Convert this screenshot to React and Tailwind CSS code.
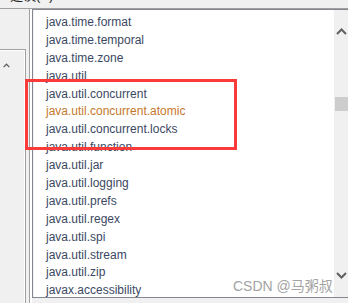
const packages = [
  "java.time.format",
  "java.time.temporal",
  "java.time.zone",
  "java.util",
  "java.util.concurrent",
  "java.util.concurrent.atomic",
  "java.util.concurrent.locks",
  "java.util.function",
  "java.util.jar",
  "java.util.logging",
  "java.util.prefs",
  "java.util.regex",
  "java.util.spi",
  "java.util.stream",
  "java.util.zip",
  "javax.accessibility",
];

const Chevron = ({ down = false, className = "" }) => (
  <svg width="11" height="7" viewBox="0 0 11 7" className={className}>
    <polyline
      points={down ? "1,1 5.5,5.5 10,1" : "1,6 5.5,1.5 10,6"}
      fill="none"
      stroke="#606060"
      strokeWidth="2"
    />
  </svg>
);

const App = () => {
  return (
    <div
      className="relative w-[348px] h-[303px] overflow-hidden bg-[#f0f0f0]"
      style={{ fontFamily: '"Liberation Sans", "Noto Sans CJK SC", sans-serif' }}
    >
      <div className="h-[9px] overflow-hidden border-b border-[#a0a0a0]">
        <div className="ml-[10px] -mt-[11px] text-[13px] leading-[14px] text-[#222]">
          建议(S)
        </div>
      </div>

      <div className="flex h-[294px]">
        <div className="w-[29px] shrink-0 flex flex-col">
          <div className="h-[40px]" />
          <div className="w-[26px] flex-1 border-t border-r border-[#a0a0a0]">
            <div className="h-full border-t border-r border-white pl-[3px] pt-[12px]">
              <Chevron className="w-[7px] h-[5px]" />
            </div>
          </div>
        </div>
        <div className="w-[1px] bg-[#a0a0a0]" />
        <div className="w-[2px] bg-white" />
        <div className="flex-1 flex border-l border-t border-b border-[#828790] h-[289px]">
          <div className="flex-1 overflow-hidden bg-white pl-[12px] pt-[3px] ml-[1px] text-[12px] leading-[18px]">
            {packages.map((name) => (
              <div
                key={name}
                className={
                  name === "java.util.concurrent.atomic"
                    ? "h-[17.9px] text-[#c4782c]"
                    : "h-[17.9px] text-[#3b4863]"
                }
              >
                {name}
              </div>
            ))}
          </div>
          <div className="w-[14px] bg-[#f0f0f0] flex flex-col items-end pt-[18px]">
            <Chevron className="mr-[1px]" />
            <div className="mt-[62px] w-[13px] h-[14px] bg-[#cdcdcd]" />
            <div className="flex-1" />
            <Chevron down className="mr-[1px] mb-[18px]" />
          </div>
        </div>
      </div>

      <div className="absolute left-[25px] top-[79px] w-[212px] h-[71px] border-[3px] border-[#fb3a3a]" />

      <div className="absolute left-[233px] top-[278px] text-[14px] leading-[16px] text-[#a3a3a3]">
        CSDN @马粥叔
      </div>
    </div>
  );
};

export default App;
